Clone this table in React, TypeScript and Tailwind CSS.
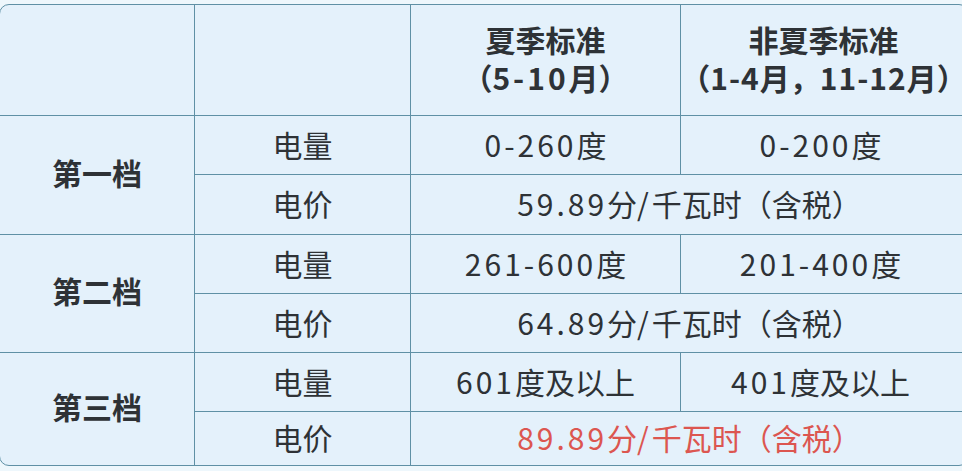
import React from "react";

const font = { fontFamily: '"Noto Sans CJK SC", "Noto Sans", sans-serif' };

function T({ s, t = "tracking-[3px]" }: { s: string; t?: string }) {
  const parts = s.split(/([\x21-\x7e]+)/).filter((p) => p.length > 0);
  return (
    <span className="whitespace-nowrap">
      {parts.map((p, i) =>
        /^[\x21-\x7e]+$/.test(p) ? (
          <span key={i} className={t}>
            {p}
          </span>
        ) : (
          <span key={i}>{p}</span>
        )
      )}
    </span>
  );
}

export default function App() {
  const cell = "min-w-0 flex items-center justify-center border-[#5f90a5] pb-[2px] whitespace-nowrap";
  return (
    <div className="w-[962px] h-[471px] overflow-hidden bg-[#eef7fc]" style={font}>
      <div className="ml-[-1px] mt-[4px] w-[970px] rounded-[10px] border border-[#5f90a5] bg-[#e4f1fb] overflow-hidden grid grid-cols-[195px_216px_270px_minmax(0,1fr)] grid-rows-[111px_59px_60px_59px_59px_59px_53px] text-[30px] text-[#2e3236]">
        <div className={`${cell} border-r border-b`} />
        <div className={`${cell} border-r border-b`} />
        <div className={`${cell} border-r border-b flex-col font-bold leading-[38px] pb-[4px]`}>
          <T s="夏季标准" />
          <T s="（5-10月）" />
        </div>
        <div className={`${cell} border-b flex-col font-bold leading-[38px] pb-[4px] pr-[2px]`}>
          <T s="非夏季标准" />
          <T s="（1-4月，11-12月）" t="tracking-[1px]" />
        </div>

        <div className={`${cell} row-span-2 border-r border-b font-bold pb-[6px]`}>第一档</div>
        <div className={`${cell} border-r border-b`}>电量</div>
        <div className={`${cell} border-r border-b`}><T s="0-260度" /></div>
        <div className={`${cell} border-b pr-[8px]`}><T s="0-200度" /></div>
        <div className={`${cell} border-r border-b`}>电价</div>
        <div className={`${cell} col-span-2 border-b`}><T s="59.89分/千瓦时（含税）" /></div>

        <div className={`${cell} row-span-2 border-r border-b font-bold pb-[6px]`}>第二档</div>
        <div className={`${cell} border-r border-b`}>电量</div>
        <div className={`${cell} border-r border-b`}><T s="261-600度" /></div>
        <div className={`${cell} border-b pr-[8px]`}><T s="201-400度" /></div>
        <div className={`${cell} border-r border-b`}>电价</div>
        <div className={`${cell} col-span-2 border-b`}><T s="64.89分/千瓦时（含税）" /></div>

        <div className={`${cell} row-span-2 border-r font-bold pb-[6px]`}>第三档</div>
        <div className={`${cell} border-r border-b`}>电量</div>
        <div className={`${cell} border-r border-b`}><T s="601度及以上" /></div>
        <div className={`${cell} border-b pr-[8px]`}><T s="401度及以上" /></div>
        <div className={`${cell} border-r`}>电价</div>
        <div className={`${cell} col-span-2 text-[#dc5650]`}><T s="89.89分/千瓦时（含税）" /></div>
      </div>
    </div>
  );
}
